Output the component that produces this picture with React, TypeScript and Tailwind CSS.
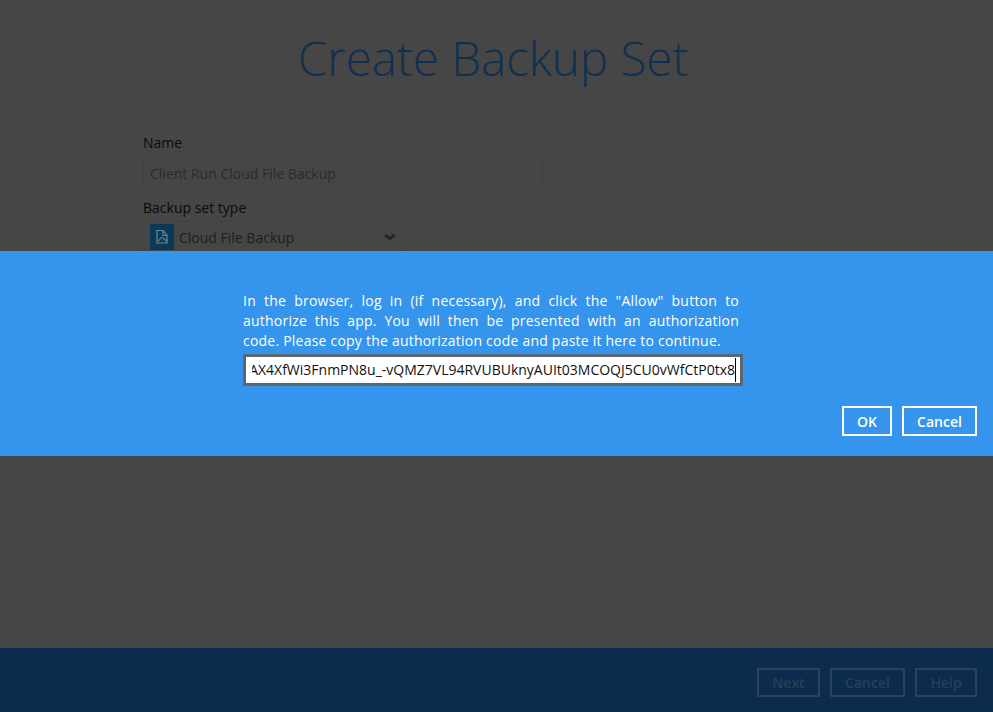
export default function App() {
  const font = { fontFamily: '"Open Sans", sans-serif' };
  return (
    <div className="relative flex h-[712px] w-[993px] flex-col overflow-hidden bg-[#464646]" style={font}>
      <main className="flex-1 overflow-hidden">
        <h1 className="mt-[24px] pr-[7px] text-center text-[47.5px] font-light leading-[68px] text-[#113050]">Create Backup Set</h1>
        <div className="ml-[143px] mt-[41px] w-[400px]">
          <div className="text-[14px] leading-[20px] text-[#0b0b0b]">Name</div>
          <div className="mt-[4px] flex h-[32px] items-center border border-[#414141] px-[6px] text-[14px] text-[#2c2c2c]">Client Run Cloud File Backup</div>
          <div className="mt-[9px] text-[14px] leading-[20px] text-[#0b0b0b]">Backup set type</div>
          <div className="mt-[3px] flex h-[32px] w-[264px] items-center border border-[#424242] pl-[6px] pr-[9px] text-[14px] text-[#1e1e1e]">
            <div className="flex h-[26px] w-[24px] items-center justify-center bg-[#0b3a56]">
              <svg width="14" height="16" viewBox="0 0 14 16" fill="none" stroke="#6f8594" strokeWidth="1.2">
                <path d="M2 1.5h6l4 5v7.5H2z" />
                <path d="M8 1.5v5h4" />
                <path d="M3 12c2-.2 2-3.5 4-3.5s2 2.5 5 3.5" />
              </svg>
            </div>
            <span className="ml-[5px] flex-1">Cloud File Backup</span>
            <svg width="14" height="8" viewBox="0 0 14 8" fill="none" stroke="#262626" strokeWidth="3">
              <path d="M2 2l5 3.5 5-3.5" />
            </svg>
          </div>
        </div>
      </main>
      <footer className="flex h-[64px] items-start justify-end gap-[10px] bg-[#0d2b4d] pr-[16px] pt-[20px]">
        <div className="flex h-[29px] w-[63px] items-center justify-center border-2 border-[#2a4359] text-[14px] font-semibold text-[#283f55]">Next</div>
        <div className="flex h-[29px] w-[75px] items-center justify-center border-2 border-[#2a4359] text-[14px] font-semibold text-[#283f55]">Cancel</div>
        <div className="flex h-[29px] w-[62px] items-center justify-center border-2 border-[#2a4359] text-[14px] font-semibold text-[#283f55]">Help</div>
      </footer>
      <div className="absolute left-0 right-0 top-[251px] flex h-[205px] flex-col bg-[#3594ec] pt-[40px]">
        <div className="ml-[243px] w-[500px]">
          <p className="w-[496px] text-justify text-[14px] leading-[20px] tracking-[0.22px] text-white">
            In the browser, log in (if necessary), and click the "Allow" button to authorize this app. You will then be presented with an authorization code. Please copy the authorization code and paste it here to continue.
          </p>
          <div className="mt-[3px] flex h-[32px] w-[500px] items-center border-[3px] border-[#5c6670] bg-white pb-[1px] pl-[6px] pr-[4px]">
            <div className="flex min-w-0 flex-1 justify-end overflow-hidden">
              <span className="whitespace-nowrap text-[14px] text-[#111111]">4AX4XfWi3FnmPN8u_-vQMZ7VL94RVUBUknyAUIt03MCOQJ5CU0vWfCtP0tx8</span>
            </div>
            <span className="h-[24px] w-px shrink-0 bg-black" />
          </div>
        </div>
        <div className="mt-[20px] flex justify-end gap-[10px] pr-[16px]">
          <div className="flex h-[30px] w-[50px] items-center justify-center border-2 border-white text-[14px] font-semibold text-white">OK</div>
          <div className="flex h-[30px] w-[75px] items-center justify-center border-2 border-white text-[14px] font-semibold text-white">Cancel</div>
        </div>
      </div>
    </div>
  );
}
